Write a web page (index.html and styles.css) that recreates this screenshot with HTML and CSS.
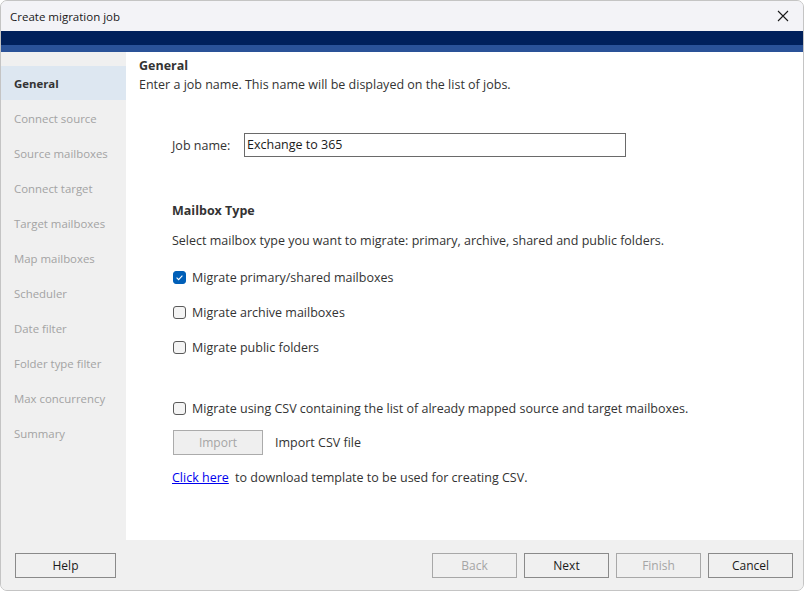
FILE: index.html
```html
<!DOCTYPE html>
<html>
<head>
<meta charset="utf-8">
<link rel="stylesheet" href="styles.css">
</head>
<body>
<div class="window">
  <div class="titlebar">
    <span class="title">Create migration job</span>
    <svg class="close" width="12" height="12" viewBox="0 0 12 12"><path d="M1 1 L11 11 M11 1 L1 11" stroke="#1a1a1a" stroke-width="1.1" fill="none"/></svg>
  </div>
  <div class="band-dark"></div>
  <div class="band-blue"></div>
  <div class="body">
    <nav class="sidebar">
      <div class="nav-item active">General</div>
      <div class="nav-item">Connect source</div>
      <div class="nav-item">Source mailboxes</div>
      <div class="nav-item">Connect target</div>
      <div class="nav-item">Target mailboxes</div>
      <div class="nav-item">Map mailboxes</div>
      <div class="nav-item">Scheduler</div>
      <div class="nav-item">Date filter</div>
      <div class="nav-item">Folder type filter</div>
      <div class="nav-item">Max concurrency</div>
      <div class="nav-item">Summary</div>
    </nav>
    <main class="main">
      <div class="heading">General</div>
      <div class="desc">Enter a job name. This name will be displayed on the list of jobs.</div>
      <div class="form">
        <div class="job-row">
          <span class="label">Job name:</span>
          <div class="input">Exchange to 365</div>
        </div>
        <div class="section-title">Mailbox Type</div>
        <div class="section-desc">Select mailbox type you want to migrate: primary, archive, shared and public folders.</div>
        <div class="check-row first"><span class="box checked"><svg width="13" height="13" viewBox="0 0 13 13"><path d="M3.6 6.7 L5.6 8.6 L9.4 4.6" stroke="#fff" stroke-width="1.1" fill="none"/></svg></span><span>Migrate primary/shared mailboxes</span></div>
        <div class="check-row"><span class="box"></span><span>Migrate archive mailboxes</span></div>
        <div class="check-row"><span class="box"></span><span>Migrate public folders</span></div>
        <div class="check-row csv"><span class="box"></span><span>Migrate using CSV containing the list of already mapped source and target mailboxes.</span></div>
        <div class="import-row">
          <div class="btn import">Import</div>
          <span>Import CSV file</span>
        </div>
        <div class="link-row"><a class="link" href="#">Click here</a> to download template to be used for creating CSV.</div>
      </div>
    </main>
  </div>
  <div class="footer">
    <div class="btn help">Help</div>
    <div class="nav-buttons">
      <div class="btn disabled">Back</div>
      <div class="btn">Next</div>
      <div class="btn disabled">Finish</div>
      <div class="btn">Cancel</div>
    </div>
  </div>
</div>
</body>
</html>
```
FILE: styles.css
```css
* { box-sizing: border-box; }
html, body { margin: 0; padding: 0; background: #ffffff; }
body {
  font-family: "Open Sans", "Noto Sans", "Liberation Sans", sans-serif;
  font-size: 12.5px;
  color: #1f1f1f;
}
.window {
  width: 804px;
  height: 591px;
  border: 1px solid #c4c4c4;
  border-radius: 7px;
  overflow: hidden;
  display: flex;
  flex-direction: column;
  background: #f0f0f0;
}
.titlebar {
  height: 30px;
  background: #f3f3f7;
  display: flex;
  align-items: center;
  justify-content: space-between;
  padding: 0 14px 0 9px;
  flex: none;
}
.title { font-size: 11.5px; color: #1a1a1a; }
.close { display: block; }
.band-dark { height: 14px; background: #00205b; flex: none; }
.band-blue { height: 7px; background: #2a5298; flex: none; }
.body {
  flex: 1;
  display: flex;
  min-height: 0;
}
.sidebar {
  width: 125px;
  flex: none;
  background: #f0f0f0;
  padding-top: 14px;
}
.nav-item {
  height: 35px;
  line-height: 35px;
  padding-left: 13px;
  color: #a3a3a3;
  white-space: nowrap;
  font-size: 11.4px;
}
.nav-item.active {
  background: #dde7f1;
  color: #333;
  font-weight: 700;
  height: 34px;
  line-height: 35px;
  margin-bottom: 1px;
}
.main {
  flex: 1;
  background: #fff;
  padding: 5px 0 0 13px;
}
.heading { font-weight: 700; color: #333; line-height: 18px; }
.desc { line-height: 20px; color: #333; }
.form { padding-left: 33px; padding-top: 38px; color: #333; }
.job-row { display: flex; align-items: center; height: 24px; }
.label { width: 72px; flex: none; }
.input {
  width: 382px;
  height: 24px;
  border: 1px solid #6a6a6a;
  padding-left: 2px;
  line-height: 22px;
  color: #1a1a1a;
}
.section-title { font-weight: 700; margin-top: 44px; line-height: 20px; }
.section-desc { margin-top: 10px; line-height: 20px; }
.check-row {
  display: flex;
  align-items: center;
  gap: 6px;
  height: 35px;
}
.check-row.first { margin-top: 9px; }
.check-row.csv { margin-top: 33px; height: 20px; }
.box {
  width: 13px;
  height: 13px;
  border: 1px solid #5a5a5a;
  border-radius: 3px;
  background: #f4f4f4;
  flex: none;
  display: flex;
  margin-left: 1px;
}
.box.checked { background: #005fb8; border-color: #005fb8; }
.box.checked svg { margin: -1px; }
.import-row {
  display: flex;
  align-items: center;
  gap: 12px;
  margin-top: 12px;
  padding-left: 1px;
}
.btn {
  width: 85px;
  height: 25px;
  border: 1px solid #8a8a8a;
  background: #f0f0f0;
  display: flex;
  align-items: center;
  justify-content: center;
  color: #1a1a1a;
  font-size: 12px;
}
.btn.disabled { color: #a5a5a5; border-color: #a8a8a8; }
.btn.import { width: 90px; color: #a5a5a5; border-color: #ababab; background: #efefef; }
.import-row span { font-size: 12.5px; }
.link-row { margin-top: 13px; line-height: 20px; }
.link { color: #0000ee; text-decoration: underline; margin-right: 3px; }
.footer {
  height: 50px;
  flex: none;
  display: flex;
  align-items: center;
  justify-content: space-between;
  padding: 0 10px 0 14px;
  background: #f0f0f0;
}
.btn.help { width: 101px; }
.nav-buttons { display: flex; gap: 7px; }
```
